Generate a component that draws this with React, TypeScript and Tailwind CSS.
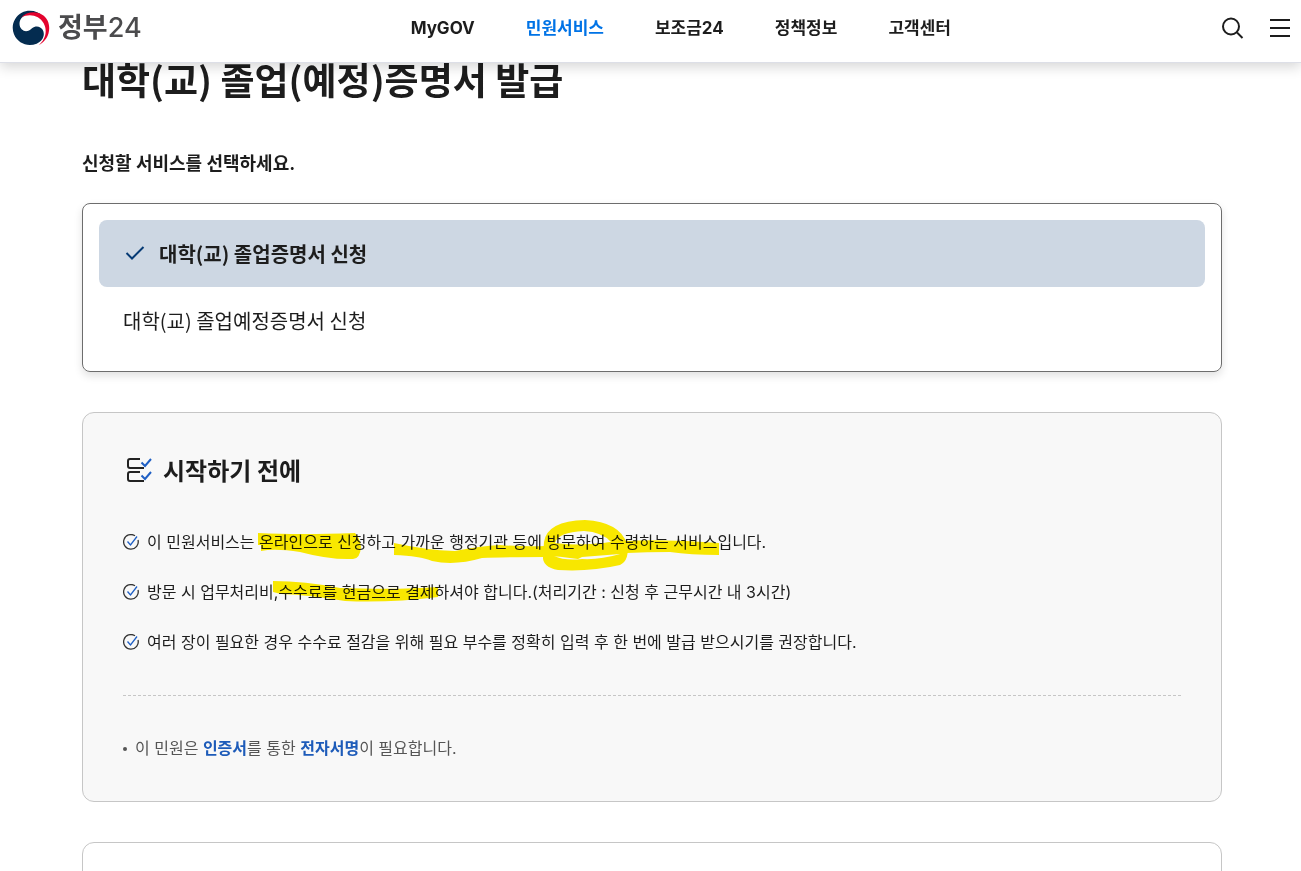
const navItems = [
    { label: 'MyGOV', active: false },
    { label: '민원서비스', active: true },
    { label: '보조금24', active: false },
    { label: '정책정보', active: false },
    { label: '고객센터', active: false },
]

const notices = [
    '이 민원서비스는 온라인으로 신청하고 가까운 행정기관 등에 방문하여 수령하는 서비스입니다.',
    '방문 시 업무처리비,수수료를 현금으로 결제하셔야 합니다.(처리기간 : 신청 후 근무시간 내 3시간)',
    '여러 장이 필요한 경우 수수료 절감을 위해 필요 부수를 정확히 입력 후 한 번에 발급 받으시기를 권장합니다.',
]

function GovLogo() {
    return (
        <svg width="38" height="38" viewBox="0 0 114 114" aria-hidden="true">
            <path d="M92 21C78 5 50 0 29 11C6 23-4 52 6 76C17 103 47 115 74 104C94 95 100 76 92 62C86 52 71 48 60 58C50 68 38 70 29 61C17 48 22 25 42 17C58 11 78 11 92 21Z" fill="#042c50" />
            <path d="M27 26C50 1 92 5 107 35C119 63 107 95 79 109C101 92 107 65 95 43C82 20 53 12 27 26Z" fill="#e4032e" />
        </svg>
    )
}

function ChecklistIcon() {
    return (
        <svg width="32" height="32" viewBox="0 1 32 32" fill="none" strokeWidth="2" aria-hidden="true">
            <path d="M17 4H7Q5 4 5 6V11Q5 13 7 13H21M17 17H7Q5 17 5 19V24Q5 26 7 26H21" stroke="#222" />
            <path d="M18.5 7.5L22 11L28 4M18.5 20.5L22 24L28 17" stroke="#1f5fc4" />
        </svg>
    )
}

function CheckCircleIcon() {
    return (
        <svg className="shrink-0" width="16" height="16" viewBox="0 0 16 16" fill="none" aria-hidden="true">
            <path d="M12 1.8A7.3 7.3 0 1 0 15 6" stroke="#333" strokeWidth="1.3" />
            <path d="M4.5 7.5L7.5 11L14 2.5" stroke="#1f5fc4" strokeWidth="1.3" />
        </svg>
    )
}

// Marker strokes drawn over the notice list
function Highlights() {
    return (
        <svg
            className="pointer-events-none absolute top-0 left-0 mix-blend-multiply"
            width="640"
            height="100"
            viewBox="123 510 640 100"
            fill="#ffee00"
            aria-hidden="true"
        >
            <path d="M258 533Q300 535 355 533Q360 538 361 547Q360 559 353 559Q330 560 300 552Q275 548 261 551V545H258Z" />
            <path d="M394 543Q425 550 455 551Q480 546 500 545Q525 547 545 546Q590 545 625 541Q670 539 719 543V555Q690 555 670 552Q630 552 545 557Q500 557 482 558Q455 566 432 561Q420 556 394 555Z" />
            <path fillRule="evenodd" d="M544 542Q547 521 585 520Q620 522 627 544Q630 560 620 565Q590 572 558 570Q542 567 543 556Z M555 543Q558 532 584 531Q602 532 611 542Q585 547 555 543Z M554 556L578 559L582 557L620 554Q600 560 582 559Q565 561 554 556Z" />
            <path d="M273 581Q305 581 340 588Q400 590 438 587V597Q390 603 345 601Q310 595 281 594L273 592Z" />
        </svg>
    )
}

function Header() {
    return (
        <header className="fixed inset-x-0 top-0 z-10 flex h-[63px] items-center border-b border-[#dddfe7] bg-white pb-1.5 shadow-[0_4px_12px_rgba(0,0,0,0.16)]">
            <a href="#" className="ml-3 flex items-center gap-2 text-[27px] text-[#4b4b4d]">
                <GovLogo />
                <span className="leading-8">
                    <span className="font-bold">정부</span>
                    <span className="font-medium">24</span>
                </span>
            </a>
            <nav className="ml-[269px] flex gap-[51px] text-[17px] leading-6 font-bold text-[#1d1d1d]">
                {navItems.map((item) => (
                    <a key={item.label} href="#" className={item.active ? 'text-[#0073e6]' : ''}>
                        {item.label}
                    </a>
                ))}
            </nav>
            <div className="mr-2.5 ml-auto flex items-center gap-6">
                <button aria-label="검색">
                    <svg width="24" height="24" viewBox="0 0 24 24" fill="none" stroke="#1d1d1d" strokeWidth="2">
                        <circle cx="10" cy="10.5" r="8" />
                        <path d="M16 16.5L21.5 22" />
                    </svg>
                </button>
                <button aria-label="전체메뉴">
                    <svg width="22" height="24" viewBox="0 0 22 24" stroke="#1d1d1d" strokeWidth="2">
                        <path d="M1 4H21M1 12H21M1 20H21" />
                    </svg>
                </button>
            </div>
        </header>
    )
}

export default function App() {
    return (
        <div className="h-screen overflow-hidden bg-white font-['Inter','Noto_Sans_CJK_KR',sans-serif] text-[#1d1d1d]">
            <Header />
            <main className="pt-[53px] pl-[3px]">
                <div className="mx-auto max-w-[1140px]">
                    <h1 className="font-['Noto_Sans_CJK_KR',sans-serif] text-[37px] leading-[52px] font-bold">
                        대학(교) 졸업(예정)증명서 발급
                    </h1>
                    <h2 className="mt-11 text-lg leading-[30px] font-bold">신청할 서비스를 선택하세요.</h2>

                    {/* Service choice */}
                    <div className="mt-6 rounded-lg border border-[#6d6d6d] px-4 pt-4 pb-[17px] font-['Noto_Sans_CJK_KR',sans-serif] text-xl shadow-[0_4px_8px_rgba(0,0,0,0.12)]">
                        <button
                            aria-pressed="true"
                            className="flex min-h-[67px] w-full items-center gap-3 rounded-lg bg-[#cdd7e3] px-6 text-left font-bold"
                        >
                            <svg width="24" height="24" viewBox="0 0 24 24" fill="none" stroke="#063a74" strokeWidth="2" aria-hidden="true">
                                <path d="M3.5 11L9 16.5L20.5 5" />
                            </svg>
                            대학(교) 졸업증명서 신청
                        </button>
                        <button aria-pressed="false" className="flex min-h-[67px] w-full items-center px-6 text-left">
                            대학(교) 졸업예정증명서 신청
                        </button>
                    </div>

                    {/* Before you start */}
                    <section className="mt-10 rounded-xl border border-[#c6c6c6] bg-[#f8f8f8] p-10">
                        <h2 className="flex items-center gap-2 text-2xl leading-[38px] font-bold">
                            <ChecklistIcon />
                            시작하기 전에
                        </h2>
                        <div className="relative mt-[19px] pt-5">
                            <ul className="flex flex-col gap-[26px] leading-6">
                                {notices.map((notice) => (
                                    <li key={notice} className="flex items-center gap-2">
                                        <CheckCircleIcon />
                                        {notice}
                                    </li>
                                ))}
                            </ul>
                            <Highlights />
                        </div>
                        <div className="mt-[41px] border-t border-dashed border-[#c6c6c6] pt-10">
                            <p className="flex items-center gap-2 leading-[25px] text-[#555]">
                                <span className="size-1 rounded-full bg-[#555]" />
                                <span>
                                    이 민원은 <strong className="text-[#1d5bb9]">인증서</strong>를 통한{' '}
                                    <strong className="text-[#1d5bb9]">전자서명</strong>이 필요합니다.
                                </span>
                            </p>
                        </div>
                    </section>

                    <section className="mt-10 h-40 rounded-xl border border-[#c6c6c6]" />
                </div>
            </main>
        </div>
    )
}
